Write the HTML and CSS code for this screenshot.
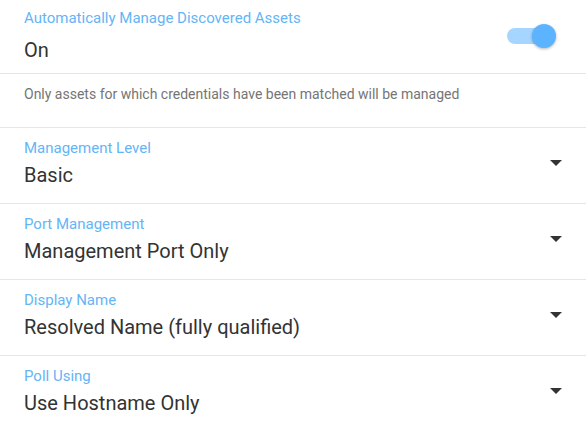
FILE: index.html
```html
<!DOCTYPE html>
<html lang="en">
<head>
    <meta charset="UTF-8">
    <title>Asset Settings</title>
    <link rel="stylesheet" href="styles.css">
</head>
<body>

    <div class="field field-toggle">
        <div class="field-main">
            <div class="label">Automatically Manage Discovered Assets</div>
            <div class="value value-toggle">On</div>
        </div>
        <div class="switch">
            <div class="switch-track"></div>
            <div class="switch-thumb"></div>
        </div>
    </div>

    <div class="hint">Only assets for which credentials have been matched will be managed</div>

    <div class="field">
        <div class="field-main">
            <div class="label">Management Level</div>
            <div class="value">Basic</div>
        </div>
        <span class="arrow"></span>
    </div>

    <div class="field">
        <div class="field-main">
            <div class="label">Port Management</div>
            <div class="value">Management Port Only</div>
        </div>
        <span class="arrow"></span>
    </div>

    <div class="field">
        <div class="field-main">
            <div class="label">Display Name</div>
            <div class="value">Resolved Name (fully qualified)</div>
        </div>
        <span class="arrow"></span>
    </div>

    <div class="field field-last">
        <div class="field-main">
            <div class="label">Poll Using</div>
            <div class="value">Use Hostname Only</div>
        </div>
        <span class="arrow"></span>
    </div>

</body>
</html>
```

FILE: styles.css
```css
body {
    margin: 0;
    background: #fff;
    font-family: Roboto, "Noto Sans", sans-serif;
    color: #333;
}

.field {
    display: flex;
    align-items: center;
    padding: 11px 24px 16px;
    border-bottom: 1px solid #e6e6e6;
}

.field-main {
    flex: 1;
}

.label {
    font-size: 15px;
    line-height: 18px;
    color: #64b5f6;
}

.value {
    font-size: 20px;
    line-height: 24px;
    margin-top: 6px;
    color: #333;
}

.field-toggle {
    padding: 9px 29px 11px 24px;
}

.value-toggle {
    margin-top: 11px;
}

.hint {
    font-size: 14px;
    line-height: 16px;
    color: #757575;
    padding: 12px 24px 25px;
    border-bottom: 1px solid #e6e6e6;
}

.field-last {
    border-bottom: none;
}

/* toggle switch */
.switch {
    position: relative;
    width: 50px;
    height: 26px;
}

.switch-track {
    position: absolute;
    left: 0;
    top: 5px;
    width: 38px;
    height: 16px;
    border-radius: 8px;
    background: #a6d6ff;
}

.switch-thumb {
    position: absolute;
    left: 25px;
    top: 1px;
    width: 24px;
    height: 24px;
    border-radius: 50%;
    background: #5cb3ff;
    box-shadow: 0 1px 3px rgba(0, 0, 0, 0.3);
}

.arrow {
    width: 0;
    height: 0;
    border-left: 6px solid transparent;
    border-right: 6px solid transparent;
    border-top: 6px solid #333;
}
```
